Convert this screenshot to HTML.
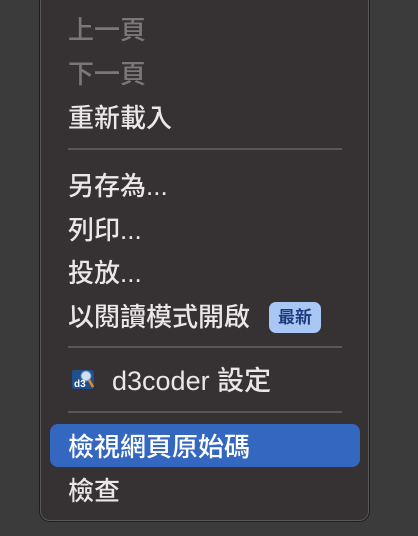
<!DOCTYPE html>
<html><head><meta charset="utf-8"><style>
body{margin:0;width:418px;height:536px;background:#3b3b3b;overflow:hidden;position:relative;font-family:"Liberation Sans","Noto Sans CJK TC",sans-serif;}
.menu{position:absolute;left:40px;top:-10px;width:329px;height:531px;background:#363132;border:1px solid #5c5859;border-radius:10px;box-sizing:border-box;box-shadow:0 0 0 1px #1e1e1e;}
.t{position:absolute;left:68px;font-size:26px;line-height:30px;color:#e9e7e8;white-space:nowrap;font-weight:500;}
.d{color:#7b7778;}
.sep{position:absolute;left:68px;width:274px;height:2px;background:#5a5657;}
.hl{position:absolute;left:50px;top:424px;width:310px;height:43px;background:#3468c0;border-radius:8px;}
.badge{display:inline-block;vertical-align:middle;margin-left:19px;background:#a9c7f5;color:#1d3b7a;font-size:17px;font-weight:bold;line-height:31px;padding:0 9px;border-radius:7px;position:relative;top:-2px;}
</style></head><body>
<div class="menu"></div>
<div class="t d" style="top:15px">上一頁</div>
<div class="t d" style="top:59px">下一頁</div>
<div class="t" style="top:103px">重新載入</div>
<div class="sep" style="top:148px"></div>
<div class="t" style="top:171px">另存為...</div>
<div class="t" style="top:215px">列印...</div>
<div class="t" style="top:258px">投放...</div>
<div class="t" style="top:302px">以閱讀模式開啟<span class="badge">最新</span></div>
<div class="sep" style="top:346px"></div>
<svg style="position:absolute;left:71px;top:368px" width="24" height="22" viewBox="0 0 24 22">
<rect x="1" y="2" width="22" height="19" rx="2" fill="#1f4f8c"/>
<circle cx="15" cy="8" r="5" fill="#cfe2f5" stroke="#6a8fb8"/>
<line x1="18" y1="12" x2="22" y2="19" stroke="#e08a2a" stroke-width="2.5"/>
<text x="3" y="19" font-size="10" font-weight="bold" fill="#fff" font-family="Liberation Sans">d3</text>
</svg>
<div class="t" style="top:366px;left:112px;font-size:27px">d3coder 設定</div>
<div class="sep" style="top:411px"></div>
<div class="hl"></div>
<div class="t" style="top:432px;color:#fff">檢視網頁原始碼</div>
<div class="t" style="top:476px">檢查</div>
</body></html>
